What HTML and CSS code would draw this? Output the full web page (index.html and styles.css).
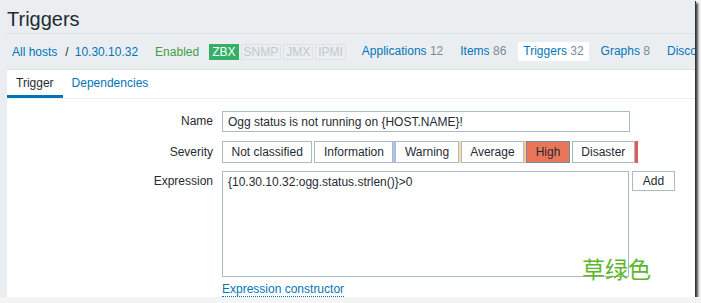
FILE: index.html
```html
<!DOCTYPE html>
<html lang="en">
<head>
  <meta charset="UTF-8">
  <title>Triggers</title>
  <link rel="stylesheet" href="styles.css">
</head>
<body>
  <div class="shot">
    <div class="page">
      <h1 class="title">Triggers</h1>

      <div class="host-nav">
        <div class="crumbs">
          <a href="#">All hosts</a><span class="sep">/</span><a href="#">10.30.10.32</a>
        </div>
        <span class="status">Enabled</span>
        <div class="badges">
          <span class="badge on">ZBX</span>
          <span class="badge">SNMP</span>
          <span class="badge">JMX</span>
          <span class="badge">IPMI</span>
        </div>
        <ul class="nav-items">
          <li><a href="#">Applications</a> <span class="count">12</span></li>
          <li><a href="#">Items</a> <span class="count">86</span></li>
          <li class="selected"><a href="#">Triggers</a> <span class="count">32</span></li>
          <li><a href="#">Graphs</a> <span class="count">8</span></li>
          <li><a href="#">Discov</a></li>
        </ul>
      </div>

      <div class="panel">
        <ul class="tabs">
          <li class="active">Trigger</li>
          <li><a href="#">Dependencies</a></li>
        </ul>

        <div class="form">
          <label class="form-label">Name</label>
          <div><input class="field" type="text" value="Ogg status is not running on {HOST.NAME}!"></div>

          <label class="form-label sev-label">Severity</label>
          <ul class="severity">
            <li class="sev na">Not classified</li>
            <li class="sev info">Information</li>
            <li class="sev warn">Warning</li>
            <li class="sev avg">Average</li>
            <li class="sev high selected">High</li>
            <li class="sev dis">Disaster</li>
          </ul>

          <label class="form-label">Expression</label>
          <div class="expr">
            <textarea class="expr-text">{10.30.10.32:ogg.status.strlen()}>0</textarea>
            <button class="btn">Add</button>
          </div>

          <span></span>
          <div class="constructor-row"><a class="constructor" href="#">Expression constructor</a></div>
        </div>
      </div>
    </div>

    <span class="note">草绿色</span>
  </div>
</body>
</html>
```

FILE: styles.css
```css
* {
  box-sizing: border-box;
}

body {
  margin: 0;
  background: #f4f4f4;
  font-family: "Liberation Sans", Arial, sans-serif;
  font-size: 12px;
  color: #1f2c33;
}

a {
  color: #0275b8;
  text-decoration: none;
}

.shot {
  position: relative;
  width: 695px;
  height: 297px;
  overflow: hidden;
  background: #ebeef0;
  box-shadow: 1px 1px 0 #333, 3px 3px 2px rgba(0, 0, 0, 0.7);
}

.page {
  display: flex;
  flex-direction: column;
  height: 100%;
  margin-left: 7px;
}

.title {
  margin: 0;
  padding: 7px 0 2px;
  font-size: 20px;
  font-weight: normal;
  line-height: 24px;
  border-bottom: 1px solid #dde2e5;
}

/* host navigation */
.host-nav {
  display: flex;
  align-items: center;
  height: 36px;
  flex-shrink: 0;
  border-bottom: 1px solid #dde2e5;
  white-space: nowrap;
}

.crumbs {
  padding-left: 5px;
}

.sep {
  margin: 0 6px 0 8px;
}

.status {
  margin-left: 17px;
  color: #429e47;
}

.badges {
  display: flex;
  gap: 2px;
  margin-left: 10px;
}

.badge {
  padding: 0 2px;
  line-height: 14px;
  border: 1px solid #dde2e5;
  color: #bfc9ce;
}

.badge.on {
  background: #34af67;
  border-color: #34af67;
  color: #fff;
}

.nav-items {
  display: flex;
  gap: 7px;
  margin: 0 0 0 11px;
  padding: 0;
  list-style: none;
}

.nav-items li {
  flex-shrink: 0;
  padding: 0 5px;
  line-height: 19px;
}

.nav-items li.selected {
  background: #fff;
}

.count {
  color: #768d99;
}

/* panel */
.panel {
  flex: 1;
  background: #fff;
}

.tabs {
  display: flex;
  margin: 0;
  padding: 0;
  list-style: none;
  border-bottom: 1px solid #ebeef0;
}

.tabs li {
  height: 28px;
  padding: 1px 9px 0;
  line-height: 24px;
  border-bottom: 3px solid transparent;
}

.tabs li.active {
  border-bottom-color: #0275b8;
}

.form {
  display: grid;
  grid-template-columns: 206px auto;
  column-gap: 9px;
  row-gap: 8px;
  padding-top: 12px;
}

.form-label {
  text-align: right;
  line-height: 21px;
}

.field {
  width: 408px;
  height: 21px;
  padding: 0 5px;
  border: 1px solid #acbbc2;
  font: 12px "Liberation Sans", Arial, sans-serif;
  color: #1f2c33;
}

.sev-label {
  margin-top: 1px;
  line-height: 22px;
}

.severity {
  display: flex;
  gap: 2px;
  margin: 1px 0 0;
  padding: 0;
  list-style: none;
}

.sev {
  height: 22px;
  padding: 0 8.5px;
  line-height: 20px;
  border: 1px solid #acbbc2;
  color: #1f2c33;
  white-space: nowrap;
}

.sev.info {
  box-shadow: 2px 0 0 rgba(116, 153, 255, 0.6);
}

.sev.warn {
  box-shadow: 2px 0 0 rgba(255, 200, 89, 0.6);
}

.sev.avg {
  box-shadow: 2px 0 0 rgba(255, 160, 89, 0.6);
}

.sev.dis {
  box-shadow: 3px 0 0 #e45959;
}

.sev.selected {
  background: #e97659;
  border-color: #768d99;
  color: #1f2c33;
}

.expr {
  display: flex;
  align-items: flex-start;
  gap: 3px;
}

.expr-text {
  width: 407px;
  height: 106px;
  margin: 0;
  padding: 3px 5px;
  border: 1px solid #acbbc2;
  font: 12px/14px "Liberation Sans", Arial, sans-serif;
  color: #1f2c33;
  resize: none;
}

.btn {
  width: 43px;
  height: 20px;
  padding: 0;
  border: 1px solid #acbbc2;
  background: #fff;
  font: 12px "Liberation Sans", Arial, sans-serif;
  color: #1f2c33;
}

.constructor-row {
  margin-top: -3px;
  line-height: 14px;
}

.constructor {
  border-bottom: 1px dotted #0275b8;
}

/* annotation laid over the screenshot */
.note {
  position: absolute;
  left: 582px;
  top: 256px;
  font-family: "Noto Sans CJK SC", sans-serif;
  font-size: 23px;
  line-height: 24px;
  color: #5cb82a;
}
```
